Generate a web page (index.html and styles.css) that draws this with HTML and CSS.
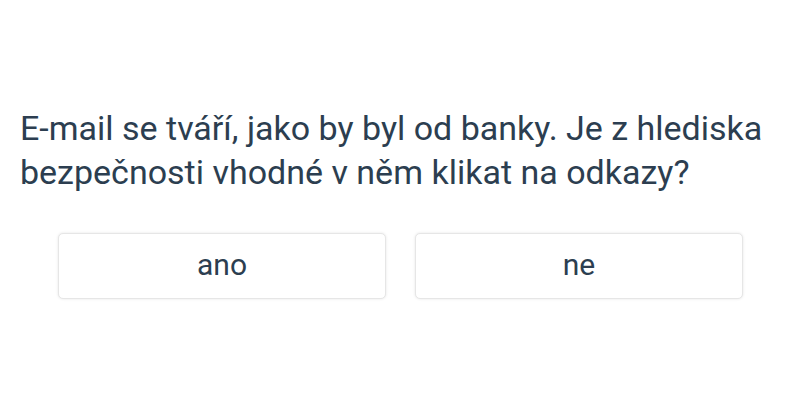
FILE: index.html
```html
<!DOCTYPE html>
<html lang="cs">
<head>
<meta charset="utf-8">
<link rel="stylesheet" href="styles.css">
</head>
<body>
<main class="quiz">
  <p class="question">E-mail se tváří, jako by byl od banky. Je z hlediska bezpečnosti vhodné v něm klikat na odkazy?</p>
  <div class="answers">
    <button class="answer">ano</button>
    <button class="answer">ne</button>
  </div>
</main>
</body>
</html>
```
FILE: styles.css
```css
html, body {
  margin: 0;
  padding: 0;
  background: #ffffff;
}
body {
  font-family: Roboto, "Liberation Sans", sans-serif;
  color: #2c3e50;
}
.quiz {
  height: 400px;
  box-sizing: border-box;
  padding: 5px 20px 0;
  display: flex;
  flex-direction: column;
  justify-content: center;
}
.question {
  margin: 0;
  font-size: 34px;
  line-height: 44px;
}
.answers {
  display: grid;
  grid-template-columns: 1fr 1fr;
  gap: 29px;
  margin: 39px 37px 0 38px;
}
.answer {
  height: 66px;
  background: #fff;
  border: 1px solid #e6e6e6;
  border-radius: 5px;
  box-shadow: 0 0 3px rgba(0,0,0,0.1);
  font-family: Roboto, "Liberation Sans", sans-serif;
  font-size: 30px;
  color: #2c3e50;
  padding: 0 0 3px;
}
```
